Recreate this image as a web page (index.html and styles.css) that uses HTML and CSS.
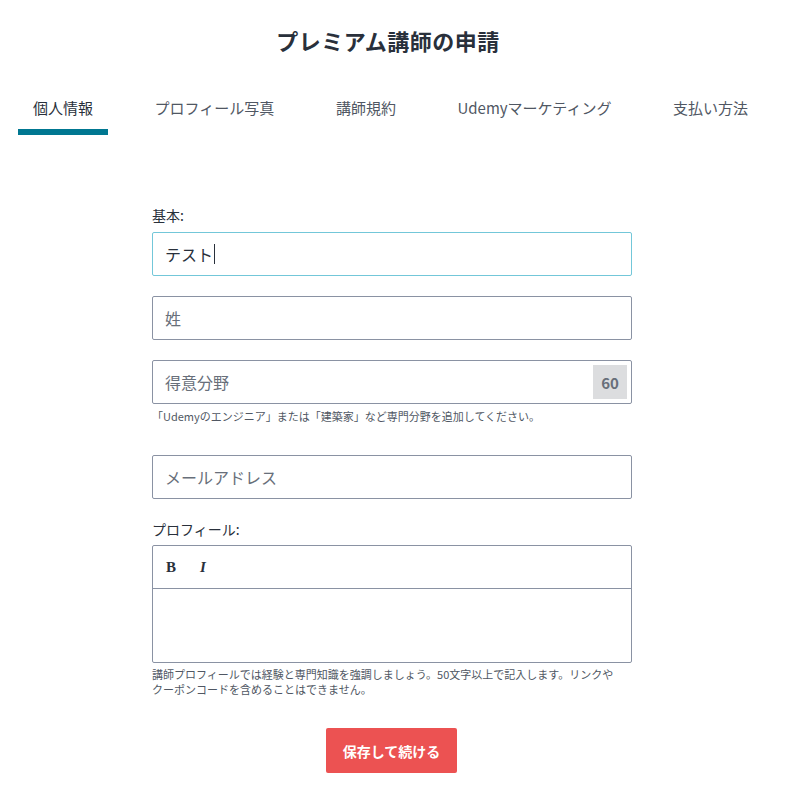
FILE: index.html
```html
<!DOCTYPE html>
<html lang="ja">
<head>
<meta charset="utf-8">
<link rel="stylesheet" href="styles.css">
</head>
<body>
<h1 class="title">プレミアム講師の申請</h1>
<nav class="tabs">
  <div class="tab active">個人情報</div>
  <div class="tab">プロフィール写真</div>
  <div class="tab">講師規約</div>
  <div class="tab">Udemyマーケティング</div>
  <div class="tab">支払い方法</div>
</nav>
<form class="form">
  <label class="label">基本:</label>
  <div class="field focused"><span class="value">テスト</span><span class="caret"></span></div>
  <div class="field"><span class="ph">姓</span></div>
  <div class="field with-count"><span class="ph">得意分野</span><span class="count">60</span></div>
  <p class="help">「Udemyのエンジニア」または「建築家」など専門分野を追加してください。</p>
  <div class="field email"><span class="ph">メールアドレス</span></div>
  <label class="label profile-label">プロフィール:</label>
  <div class="editor">
    <div class="toolbar"><span class="tb-b">B</span><span class="tb-i">I</span></div>
    <div class="editor-body"></div>
  </div>
  <p class="help help2">講師プロフィールでは経験と専門知識を強調しましょう。50文字以上で記入します。リンクやクーポンコードを含めることはできません。</p>
  <div class="actions"><button type="button" class="btn">保存して続ける</button></div>
</form>
</body>
</html>
```

FILE: styles.css
```css
* { box-sizing: border-box; }
body {
  margin: 0;
  font-family: "Noto Sans CJK JP", "Noto Sans", sans-serif;
  color: #29303b;
  background: #fff;
}
.title {
  margin: 0;
  padding-top: 25px;
  height: 60px;
  text-align: center;
  font-size: 22px;
  line-height: 30px;
  font-weight: 700;
  letter-spacing: 0.5px;
  padding-right: 14px;
}
.tabs {
  display: flex;
  justify-content: space-between;
  margin: 30px 27px 0 18px;
}
.tab {
  padding: 7px 15px 0;
  height: 45px;
  font-size: 15px;
  line-height: 22px;
  color: #505763;
  border-bottom: 6px solid transparent;
}
.tab.active {
  color: #29303b;
  border-bottom-color: #007791;
}
.form {
  width: 480px;
  margin: 70px 0 0 152px;
  display: flex;
  flex-direction: column;
}
.label {
  font-size: 14px;
  line-height: 20px;
  margin-bottom: 7px;
}
.field {
  height: 44px;
  border: 1px solid #8a92a3;
  border-radius: 2px;
  display: flex;
  align-items: center;
  padding: 0 4px 0 12px;
  font-size: 16px;
  margin-bottom: 20px;
}
.field.focused { border-color: #73c7d9; }
.value { color: #29303b; }
.caret {
  width: 1px;
  height: 20px;
  background: #29303b;
  margin-left: 1px;
}
.ph { color: #686f7a; }
.with-count { margin-bottom: 0; }
.count {
  margin-left: auto;
  width: 34px;
  height: 34px;
  background: #dcdddf;
  color: #686f7a;
  font-weight: 700;
  font-size: 15px;
  display: flex;
  align-items: center;
  justify-content: center;
}
.help {
  margin: 5px 0 0;
  font-size: 11px;
  line-height: 15px;
  color: #505763;
}
.email { margin-top: 31px; }
.profile-label { margin-top: 0; margin-bottom: 6px; }
.editor {
  border: 1px solid #8a92a3;
  border-radius: 2px;
}
.toolbar {
  height: 43px;
  border-bottom: 1px solid #8a92a3;
  display: flex;
  align-items: center;
  padding-left: 13px;
  font-family: "Liberation Serif", serif;
  font-weight: 700;
  font-size: 15px;
  color: #29303b;
}
.tb-b { margin-right: 24px; }
.tb-i { font-style: italic; }
.editor-body { height: 73px; }
.help2 { margin-top: 4px; padding-right: 10px; }
.actions {
  display: flex;
  justify-content: center;
  margin-top: 31px;
  padding-right: 1px;
}
.btn {
  width: 131px;
  height: 45px;
  border: 0;
  border-radius: 2px;
  background: #ec5252;
  color: #fff;
  font-family: "Noto Sans CJK JP", sans-serif;
  font-weight: 700;
  font-size: 14px;
}
```
